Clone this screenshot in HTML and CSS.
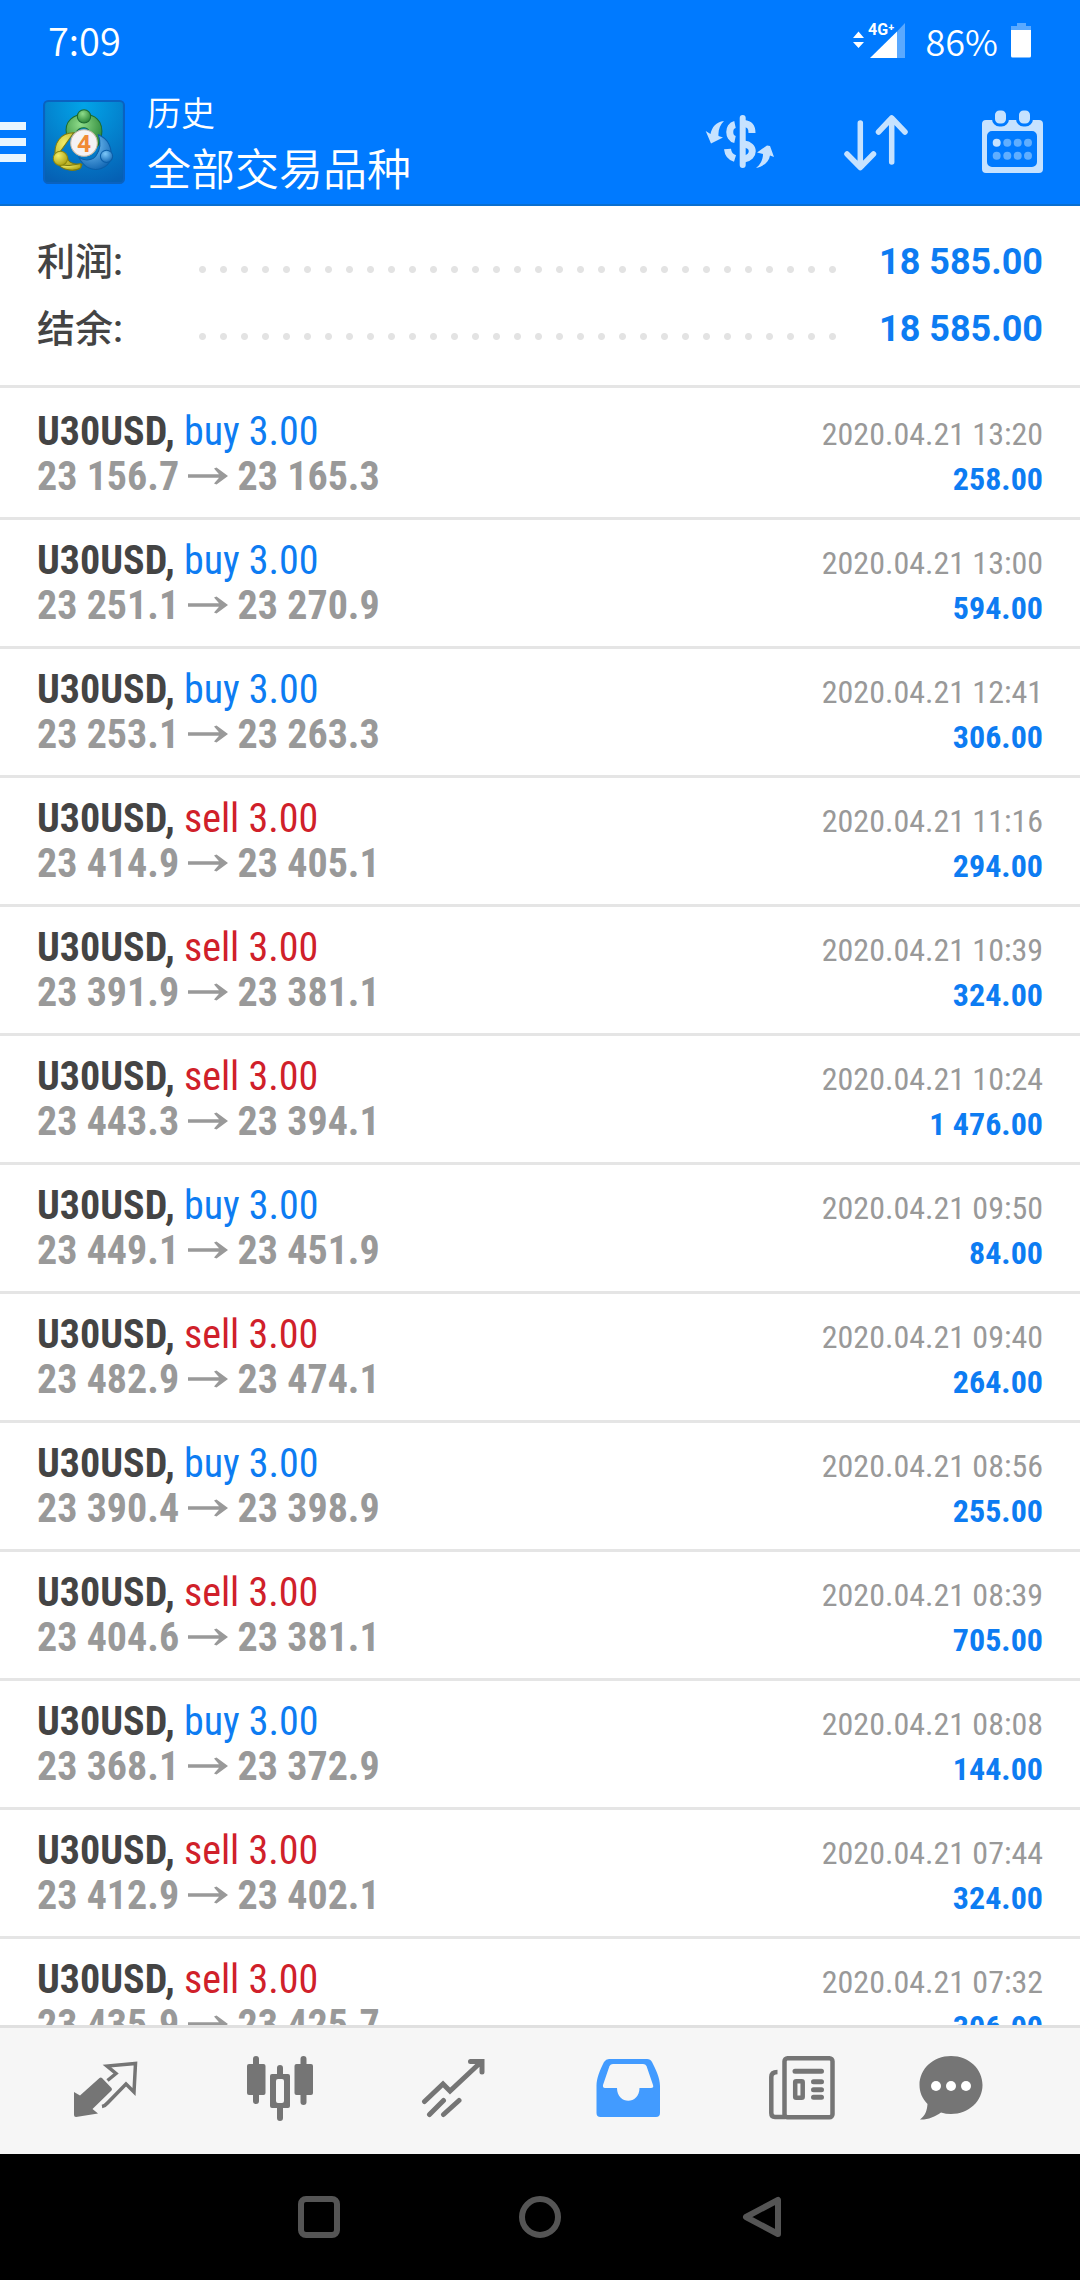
FILE: index.html
```html
<!DOCTYPE html>
<html lang="zh-CN">
<head>
<meta charset="utf-8">
<meta name="viewport" content="width=device-width, initial-scale=1">
<title>历史</title>
<link rel="stylesheet" href="styles.css">
</head>
<body>
<svg class="sprite" width="0" height="0" aria-hidden="true">
  <symbol id="arrow" viewBox="0 0 40 28">
    <path d="M0 12.300H31L26 6.500 28.500 5.500 40 14 28.500 22.500 26 21.500 31 15.700H0z"/>
  </symbol>
</svg>
<header class="top">
  <div class="status">
    <span class="clock">7:09</span>
    <div class="status-icons">
      <svg class="signal" viewBox="0 -6 54 48" aria-hidden="true">
        <path fill="#fff" d="M1 16 6.500 9.500 12 16zM1 20h11L6.500 26z"/>
        <path fill="#5aa9ff" d="M45 9.500 53 1v35h-8z"/>
        <path fill="#fff" d="M18 36 45 9.500V36z"/>
        <text class="network" x="16" y="13">4G⁺</text>
      </svg>
      <span class="percent">86%</span>
      <svg class="battery" viewBox="0 0 20 36" aria-hidden="true">
        <path fill="#5aa9ff" d="M6 1h9v3h5v5H0V4h6z"/>
        <path fill="#fff" d="M0 8h20v26a1.500 1.500 0 0 1-1.500 1.500h-17A1.500 1.500 0 0 1 0 34z"/>
      </svg>
    </div>
  </div>
  <div class="appbar">
    <button class="menu" type="button" aria-label="菜单">
      <svg viewBox="0 0 26 40"><path fill="#e8f6ff" d="M0 0h26v8H0zM0 16h26v8H0zM0 32h26v8H0z"/></svg>
    </button>
    <svg class="logo" viewBox="0 0 80 82" aria-hidden="true">
      <defs>
        <radialGradient id="bg" cx=".5" cy=".05" r="1"><stop offset="0" stop-color="#02a4e8"/><stop offset="1" stop-color="#0560b4"/></radialGradient>
        <radialGradient id="green" cx=".4" cy=".3" r=".8"><stop offset="0" stop-color="#8fdc8a"/><stop offset="1" stop-color="#1d7a2c"/></radialGradient>
        <radialGradient id="yellow" cx=".35" cy=".3" r=".8"><stop offset="0" stop-color="#f2ee6a"/><stop offset="1" stop-color="#a69a0c"/></radialGradient>
        <radialGradient id="blue" cx=".4" cy=".3" r=".8"><stop offset="0" stop-color="#7cc8fa"/><stop offset="1" stop-color="#0a5fae"/></radialGradient>
      </defs>
      <rect x="1" y="1" width="78" height="80" rx="4" fill="url(#bg)" stroke="#0a62c0" stroke-width="2"/>
      <path fill="url(#green)" stroke="#1c6b30" d="M23 34C20 20 31 14 40 14s20 5 17 22c-1 6-3 9-6 11l-5-14c-1-5-3-6-6-6s-6 1-8 5z"/>
      <path fill="url(#yellow)" stroke="#7b7a12" d="M30 32C17 32 10 42 12 56l12 0c0 5 4 7 14 7l-2 4c-4 2-10 2-14 0l-10-10z"/>
      <path fill="url(#yellow)" stroke="#7b7a12" d="M16 62c5 3 10 2 21 0v4c-5 4-16 3-21-2z"/>
      <path fill="url(#blue)" stroke="#0b5ea8" d="M54 34c10 4 14 13 12 24-3 9-14 12-22 8-4-2-7-6-9-10 6 4 14 3 17-2 4-6 5-12 2-20z"/>
      <circle cx="40" cy="16" r="6.500" fill="url(#green)" stroke="#1c6b30"/>
      <circle cx="17" cy="57" r="7" fill="url(#yellow)" stroke="#8b860f"/>
      <circle cx="62" cy="55" r="6" fill="url(#blue)" stroke="#0b5ea8"/>
      <circle cx="40" cy="42" r="13" fill="#f4f2f4" stroke="#c9b9a4"/>
      <text class="logo-digit" x="40" y="51" text-anchor="middle">4</text>
    </svg>
    <h1 class="titles"><span class="title">历史</span><span class="symbols">全部交易品种</span></h1>
    <div class="actions">
      <button type="button" aria-label="货币">
        <svg viewBox="0 0 72 72">
          <path fill="#c6e2ff" d="M20 15C12 16 8 21 6.500 28L1.700 25 7 37.500 19 31.500 14.500 30C14 24 16 19 20 15zM52 62C60 60 65 56 66 49.500L70 51 66 40 63 39.500 53 46.500 59 48C59 54 56 59 52 62z"/>
          <path class="line" stroke-width="6" d="M38.700 12V59"/>
          <path fill="none" stroke="#c6e2ff" stroke-width="7" d="M31 18.500C24 20 24 32 31 33.500M23.500 43C24 48 26 51 31 52.500M40 17.500C45 18 48 20 48 27M40 38C51 39 51 51 40 53"/>
        </svg>
      </button>
      <button type="button" aria-label="排序">
        <svg viewBox="0 0 72 72"><path class="line" stroke-width="5.500" d="M20.300 17V60M7 48 20.300 61.500 33.500 48M51.700 56V13M38.500 26 51.700 12 65 26"/></svg>
      </button>
      <button type="button" aria-label="日期">
        <svg viewBox="0 0 72 72">
          <path fill="#c6e2ff" fill-rule="evenodd" d="M10 14H63a4 4 0 0 1 4 4V63a4 4 0 0 1-4 4H10a4 4 0 0 1-4-4V18a4 4 0 0 1 4-4zM16 25a5 5 0 0 0-5 5V56a5 5 0 0 0 5 5H56a5 5 0 0 0 5-5V30a5 5 0 0 0-5-5z"/>
          <g fill="#c6e2ff" stroke="#007aff" stroke-width="3"><rect x="17.500" y="3" width="14" height="16" rx="6"/><rect x="41.500" y="3" width="14" height="16" rx="6"/></g>
          <circle cx="20.700" cy="36.700" r="4" fill="#c6e2ff"/>
          <g fill="#60aeff"><circle cx="31.300" cy="36.700" r="4"/><circle cx="41.700" cy="36.700" r="4"/><circle cx="52" cy="36.700" r="4"/><circle cx="20.700" cy="49.700" r="4"/><circle cx="31.300" cy="49.700" r="4"/><circle cx="41.700" cy="49.700" r="4"/><circle cx="52" cy="49.700" r="4"/></g>
        </svg>
      </button>
    </div>
  </div>
</header>

<main class="content">
  <dl class="summary">
    <div class="total"><dt>利润:</dt><dd>18 585.00</dd></div>
    <div class="total"><dt>结余:</dt><dd>18 585.00</dd></div>
  </dl>
  <ul class="deals">
    <li class="deal"><span class="symbol">U30USD, <span class="buy">buy 3.00</span></span><time>2020.04.21 13:20</time><span class="prices">23 156.7 <svg class="arrow" role="img" aria-label="→"><use href="#arrow"/></svg> 23 165.3</span><span class="profit">258.00</span></li>
    <li class="deal"><span class="symbol">U30USD, <span class="buy">buy 3.00</span></span><time>2020.04.21 13:00</time><span class="prices">23 251.1 <svg class="arrow" role="img" aria-label="→"><use href="#arrow"/></svg> 23 270.9</span><span class="profit">594.00</span></li>
    <li class="deal"><span class="symbol">U30USD, <span class="buy">buy 3.00</span></span><time>2020.04.21 12:41</time><span class="prices">23 253.1 <svg class="arrow" role="img" aria-label="→"><use href="#arrow"/></svg> 23 263.3</span><span class="profit">306.00</span></li>
    <li class="deal"><span class="symbol">U30USD, <span class="sell">sell 3.00</span></span><time>2020.04.21 11:16</time><span class="prices">23 414.9 <svg class="arrow" role="img" aria-label="→"><use href="#arrow"/></svg> 23 405.1</span><span class="profit">294.00</span></li>
    <li class="deal"><span class="symbol">U30USD, <span class="sell">sell 3.00</span></span><time>2020.04.21 10:39</time><span class="prices">23 391.9 <svg class="arrow" role="img" aria-label="→"><use href="#arrow"/></svg> 23 381.1</span><span class="profit">324.00</span></li>
    <li class="deal"><span class="symbol">U30USD, <span class="sell">sell 3.00</span></span><time>2020.04.21 10:24</time><span class="prices">23 443.3 <svg class="arrow" role="img" aria-label="→"><use href="#arrow"/></svg> 23 394.1</span><span class="profit">1 476.00</span></li>
    <li class="deal"><span class="symbol">U30USD, <span class="buy">buy 3.00</span></span><time>2020.04.21 09:50</time><span class="prices">23 449.1 <svg class="arrow" role="img" aria-label="→"><use href="#arrow"/></svg> 23 451.9</span><span class="profit">84.00</span></li>
    <li class="deal"><span class="symbol">U30USD, <span class="sell">sell 3.00</span></span><time>2020.04.21 09:40</time><span class="prices">23 482.9 <svg class="arrow" role="img" aria-label="→"><use href="#arrow"/></svg> 23 474.1</span><span class="profit">264.00</span></li>
    <li class="deal"><span class="symbol">U30USD, <span class="buy">buy 3.00</span></span><time>2020.04.21 08:56</time><span class="prices">23 390.4 <svg class="arrow" role="img" aria-label="→"><use href="#arrow"/></svg> 23 398.9</span><span class="profit">255.00</span></li>
    <li class="deal"><span class="symbol">U30USD, <span class="sell">sell 3.00</span></span><time>2020.04.21 08:39</time><span class="prices">23 404.6 <svg class="arrow" role="img" aria-label="→"><use href="#arrow"/></svg> 23 381.1</span><span class="profit">705.00</span></li>
    <li class="deal"><span class="symbol">U30USD, <span class="buy">buy 3.00</span></span><time>2020.04.21 08:08</time><span class="prices">23 368.1 <svg class="arrow" role="img" aria-label="→"><use href="#arrow"/></svg> 23 372.9</span><span class="profit">144.00</span></li>
    <li class="deal"><span class="symbol">U30USD, <span class="sell">sell 3.00</span></span><time>2020.04.21 07:44</time><span class="prices">23 412.9 <svg class="arrow" role="img" aria-label="→"><use href="#arrow"/></svg> 23 402.1</span><span class="profit">324.00</span></li>
    <li class="deal"><span class="symbol">U30USD, <span class="sell">sell 3.00</span></span><time>2020.04.21 07:32</time><span class="prices">23 435.9 <svg class="arrow" role="img" aria-label="→"><use href="#arrow"/></svg> 23 425.7</span><span class="profit">306.00</span></li>
  </ul>
</main>

<nav class="tabs">
  <button type="button" aria-label="行情">
    <svg viewBox="0 0 66 66">
      <path fill="#757575" d="M1 36 7 39.500 26.500 22a2 2 0 0 1 2.500 0L38.500 32a2 2 0 0 1 0 2.500L19.500 53 25 57.500 3 61a2 2 0 0 1-2-2z"/>
      <path fill="none" stroke="#757575" stroke-width="3.500" d="M34.500 24.500 43 17.500 34 10 62.500 7.500 61 36 53 28 35 46.500Q32 50 29 50.500"/>
    </svg>
  </button>
  <button type="button" aria-label="图表">
    <svg viewBox="0 0 66 66" fill="#757575">
      <rect x="6" y="0" width="6" height="48" rx="3"/><rect x="0" y="8" width="18.500" height="31" rx="2"/>
      <rect x="53.500" y="0" width="6" height="49" rx="3"/><rect x="47.500" y="8" width="18.500" height="31" rx="2"/>
      <path d="M33 9a3 3 0 0 1 3 3v6h5a2 2 0 0 1 2 2v30a2 2 0 0 1-2 2h-5v10a3 3 0 0 1-6 0V52h-5a2 2 0 0 1-2-2V20a2 2 0 0 1 2-2h5v-6a3 3 0 0 1 3-3zM31 23a2 2 0 0 0-2 2v20a2 2 0 0 0 2 2h4a2 2 0 0 0 2-2V25a2 2 0 0 0-2-2z" fill-rule="evenodd"/>
    </svg>
  </button>
  <button type="button" aria-label="交易">
    <svg viewBox="0 0 66 66" fill="none" stroke="#757575" stroke-width="5" stroke-linecap="round"><path d="M3.500 45.500 22 28 29 35 59.500 6.500M49.500 5.500H61V16M8.500 58.500 22.500 44.500M22.500 58.500 38 44.500"/></svg>
  </button>
  <button type="button" aria-label="历史">
    <svg viewBox="0 0 66 66"><path fill="#429bff" fill-rule="evenodd" d="M14 3H52Q55.500 3 57 6C61 14 65 22 65 30V57a4 4 0 0 1-4 4H5.500a4 4 0 0 1-4-4V30C1.500 22 5 14 9 6Q11 3 14 3zM18 8Q15.500 8 14.500 10L8 29Q7.500 32 10 32H22C22 49 44.500 49 44.500 32H56Q59 32 58 29L51.500 10Q50.500 8 48 8z"/></svg>
  </button>
  <button type="button" aria-label="新闻">
    <svg viewBox="0 0 66 66" fill="none" stroke="#757575">
      <rect x="15.500" y="2.300" width="48" height="59" rx="3" stroke-width="4.500"/>
      <path stroke-width="4.500" d="M8.500 16Q2.300 16 2.300 21V57Q2.300 61 6 61H16"/>
      <path stroke-width="5" stroke-linecap="round" d="M26 15.300H52.500M44.500 25.700H52.500M44.500 33.700H52.500M44.500 41.300H52.500"/>
      <rect x="26.200" y="25.200" width="7.500" height="16.500" rx="1" stroke-width="4.500"/>
    </svg>
  </button>
  <button type="button" aria-label="聊天">
    <svg viewBox="0 0 66 66"><path fill="#757575" d="M33 0C51 0 64.500 13 64.500 29S51 58 33 58Q28 58 23 56.500C17 61 9 64 2 63.500 8 59 9 54 9.500 48 4 42 1.500 36 1.500 29 1.500 13 15 0 33 0z"/><g fill="#fff"><circle cx="18" cy="30" r="5"/><circle cx="33" cy="30" r="5"/><circle cx="48" cy="30" r="5"/></g></svg>
  </button>
</nav>

<nav class="system">
  <button type="button" aria-label="最近任务"><svg viewBox="0 0 42 42"><rect x="3" y="3" width="36" height="36" rx="5"/></svg></button>
  <button type="button" aria-label="主屏幕"><svg viewBox="0 0 42 42"><circle cx="21" cy="21" r="18"/></svg></button>
  <button type="button" aria-label="返回"><svg viewBox="0 0 42 42"><path d="M38 4V38L6 21z"/></svg></button>
</nav>
</body>
</html>
```
FILE: styles.css
```css
* {
  box-sizing: border-box;
}

body {
  margin: 0;
  height: 100vh;
  display: flex;
  flex-direction: column;
  background: #fff;
  font-family: Roboto, "Noto Sans CJK SC", sans-serif;
}

button {
  display: flex;
  align-items: center;
  justify-content: center;
  padding: 0;
  border: 0;
  background: none;
}

svg {
  display: block;
}

.sprite {
  position: absolute;
}

.top {
  flex: none;
  background: #007aff;
  border-bottom: 2px solid #0a6fd0;
  color: #fff;
  font-family: "Noto Sans CJK SC", sans-serif;
  font-weight: 350;
}

.status {
  display: flex;
  justify-content: space-between;
  align-items: center;
  height: 80px;
  padding: 0 49px 0 48px;
  font-size: 38px;
  line-height: 40px;
}

.status-icons {
  display: flex;
  align-items: center;
}

.signal {
  width: 54px;
  height: 48px;
  margin-right: 20px;
}

.network {
  fill: #fff;
  font-family: Roboto, sans-serif;
  font-size: 16px;
  font-weight: 700;
}

.percent {
  margin-right: 13px;
  font-size: 36px;
}

.battery {
  width: 20px;
  height: 36px;
}

.appbar {
  display: flex;
  align-items: center;
  height: 124px;
  padding-right: 32px;
}

.menu {
  width: 26px;
  margin-right: 17px;
}

.menu svg {
  width: 26px;
  height: 40px;
}

.logo {
  width: 82px;
  height: 84px;
  margin-right: 22px;
}

.logo-digit {
  fill: #f08a35;
  font-family: Roboto, sans-serif;
  font-size: 24px;
  font-weight: 700;
}

.titles {
  flex: 1;
  display: flex;
  flex-direction: column;
  margin: 0;
  font-weight: 350;
}

.title {
  font-size: 34px;
  line-height: 50px;
}

.symbols {
  font-size: 44px;
  line-height: 60px;
}

.actions {
  display: flex;
  gap: 64px;
}

.actions svg {
  width: 72px;
  height: 72px;
}

.line {
  fill: none;
  stroke: #c6e2ff;
  stroke-linecap: round;
  stroke-linejoin: round;
}

.content {
  flex: 1;
  min-height: 0;
  overflow-y: auto;
  scrollbar-width: none;
}

.summary {
  margin: 0;
  padding: 22px 37px 23px;
  border-bottom: 3px solid #e5e5e5;
}

.total {
  display: flex;
  align-items: flex-start;
  height: 67px;
  font-size: 38px;
  font-weight: 500;
  line-height: 69px;
}

.total dt {
  width: 155px;
  color: #444;
}

.total dd {
  flex: 1;
  margin: 0;
  color: #0d7cf2;
  font-size: 36px;
  font-weight: 700;
  display: flex;
  align-items: center;
}

.total dd::before {
  content: "";
  flex: 1;
  height: 21px;
  margin: 14px 36px 0 0;
  background: radial-gradient(circle, #e3e3e3 3px, transparent 4px) 0 0 / 21px 21px repeat-x;
}

.deals {
  margin: 0;
  padding: 3px 0 0;
  list-style: none;
}

.deal {
  display: grid;
  grid-template-columns: 1fr auto;
  grid-auto-rows: 45px;
  align-items: baseline;
  padding: 18px 37px;
  border-bottom: 3px solid #e5e5e5;
  font-family: "Roboto Condensed", Roboto, "Noto Sans CJK SC", sans-serif;
  font-size: 40px;
  line-height: 45px;
  font-weight: 700;
}

.symbol {
  color: #444;
}

.buy,
.sell {
  font-weight: 400;
}

.buy {
  color: #0d7cf2;
}

.sell {
  color: #d0202a;
}

.deal time {
  color: #999;
  font-size: 32px;
  font-weight: 400;
  text-align: right;
}

.prices {
  color: #999;
}

.arrow {
  display: inline-block;
  width: 40px;
  height: 28px;
  fill: currentColor;
  vertical-align: baseline;
}

.profit {
  color: #0d7cf2;
  font-size: 32px;
  text-align: right;
}

.tabs {
  flex: none;
  display: grid;
  grid-template-columns: repeat(5, 174fr) 124fr;
  padding: 28px 67px 32px 19px;
  border-top: 3px solid #e0e0e0;
  background: #f6f6f6;
}

.tabs svg {
  width: 66px;
  height: 66px;
}

.system {
  flex: none;
  display: grid;
  grid-template-columns: repeat(3, 1fr);
  height: 126px;
  padding: 0 208px;
  background: #000;
}

.system svg {
  width: 42px;
  height: 42px;
  fill: none;
  stroke: #555;
  stroke-width: 6;
  stroke-linejoin: round;
}
```
